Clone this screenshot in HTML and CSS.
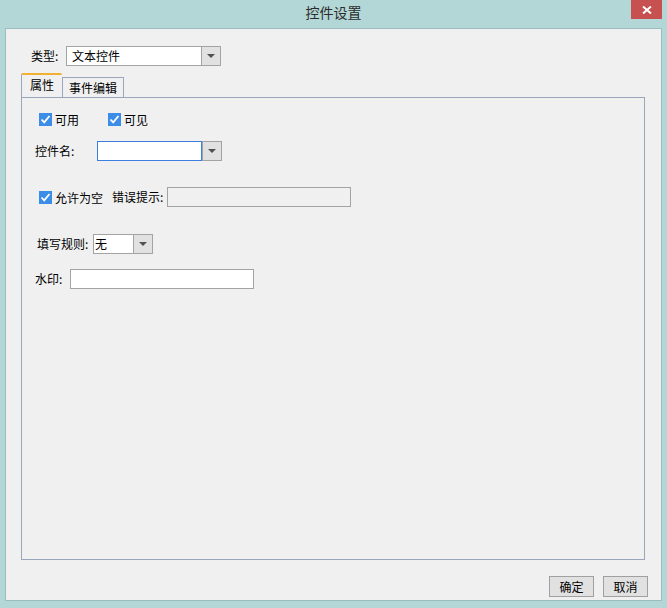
FILE: index.html
```html
<!DOCTYPE html>
<html>
<head>
<meta charset="utf-8">
<link rel="stylesheet" href="styles.css">
</head>
<body>
<div class="window">
  <div class="titlebar">
    <div class="title">控件设置</div>
    <div class="close"><svg width="10" height="8" viewBox="0 0 10 8"><path d="M1 0.5 L9 7.5 M9 0.5 L1 7.5" stroke="#fff" stroke-width="2"/></svg></div>
  </div>
  <div class="client">
    <div class="type-row">
      <span class="lbl type-lbl">类型:</span>
      <div class="combo combo-type"><div class="combo-text">文本控件</div><div class="arrow"><span class="tri"></span></div></div>
    </div>
    <div class="tabs">
      <div class="tab active">属性</div>
      <div class="tab">事件编辑</div>
    </div>
    <div class="panel">
      <div class="row row1">
        <label class="chk"><span class="box"><svg width="13" height="13" viewBox="0 0 13 13"><rect width="13" height="13" fill="#3b8de8"/><path d="M2.5 6.5 L5.2 9.3 L10.5 3" stroke="#fff" stroke-width="1.8" fill="none"/></svg></span>可用</label>
        <label class="chk chk2"><span class="box"><svg width="13" height="13" viewBox="0 0 13 13"><rect width="13" height="13" fill="#3b8de8"/><path d="M2.5 6.5 L5.2 9.3 L10.5 3" stroke="#fff" stroke-width="1.8" fill="none"/></svg></span>可见</label>
      </div>
      <div class="row row2">
        <span class="lbl name-lbl">控件名:</span>
        <div class="combo combo-name"><div class="combo-text focus"></div><div class="arrow"><span class="tri"></span></div></div>
      </div>
      <div class="row row3">
        <label class="chk"><span class="box"><svg width="13" height="13" viewBox="0 0 13 13"><rect width="13" height="13" fill="#3b8de8"/><path d="M2.5 6.5 L5.2 9.3 L10.5 3" stroke="#fff" stroke-width="1.8" fill="none"/></svg></span>允许为空</label>
        <span class="lbl err-lbl">错误提示:</span>
        <div class="input input-err"></div>
      </div>
      <div class="row row4">
        <span class="lbl rule-lbl">填写规则:</span>
        <div class="combo combo-rule"><div class="combo-text">无</div><div class="arrow"><span class="tri"></span></div></div>
      </div>
      <div class="row row5">
        <span class="lbl wm-lbl">水印:</span>
        <div class="input input-wm white"></div>
      </div>
    </div>
    <div class="buttons">
      <div class="btn">确定</div>
      <div class="btn">取消</div>
    </div>
  </div>
</div>
</body>
</html>
```
FILE: styles.css
```css
* { box-sizing: border-box; }
html, body { margin: 0; padding: 0; }
body {
  width: 667px; height: 608px; overflow: hidden;
  background: #b3d7d7;
  font-family: "Noto Sans CJK SC", "Noto Sans", sans-serif;
  font-size: 12px; color: #000;
}
.window { width: 667px; height: 608px; display: flex; flex-direction: column; }
.titlebar { height: 28px; position: relative; display: flex; justify-content: center; align-items: center; }
.title { font-size: 14px; color: #2b2b2b; margin-top: -4px; }
.close {
  position: absolute; right: 5px; top: 0; width: 31px; height: 19px;
  background: #c75050; display: flex; align-items: center; justify-content: center;
}
.client {
  margin: 0 5px; height: 573px; background: #f0f0f0;
  border: 1px solid #9bbdbd;
  display: flex; flex-direction: column;
}
.type-row { display: flex; align-items: center; height: 20px; margin-top: 17px; padding-left: 25px; }
.lbl { white-space: nowrap; line-height: 20px; }
.type-lbl { width: 35px; }
.combo { display: flex; height: 20px; }
.combo-text {
  flex: 1; background: #fff; border: 1px solid #a3a3a3; border-right: none;
  padding-left: 5px; line-height: 18px;
}
.combo-text.focus { border: 1px solid #3c7fe0; border-right: 1px solid #3c7fe0; }
.arrow {
  width: 20px; background: #e1e1e1; border: 1px solid #a3a3a3;
  display: flex; align-items: center; justify-content: center;
}
.tri { width: 0; height: 0; border-left: 4px solid transparent; border-right: 4px solid transparent; border-top: 4px solid #505050; }
.combo-type { width: 155px; }
.tabs { display: flex; align-items: flex-end; height: 24px; margin-top: 7px; padding-left: 15px; }
.tab {
  height: 20px; padding: 0 6px; border: 1px solid #9aa6bb; border-bottom: none;
  background: #f0f0f0; line-height: 19px;
}
.tab.active {
  height: 24px; width: 41px; padding: 0 8px; border-top: 2px solid #f0b030; border-radius: 2px 2px 0 0;
  line-height: 20px; border-right: none;
}
.panel {
  margin-left: 15px; width: 624px; height: 463px;
  border: 1px solid #9aa6bb; padding-top: 11px;
}
.row { display: flex; align-items: center; height: 20px; }
.chk { display: flex; align-items: center; white-space: nowrap; }
.box { width: 13px; height: 13px; margin-right: 3px; display: flex; }
.row1 { padding-left: 17px; }
.chk2 { margin-left: 29px; }
.row2 { margin-top: 12px; padding-left: 13px; }
.name-lbl { width: 62px; }
.combo-name { width: 125px; }
.row3 { margin-top: 26px; padding-left: 17px; }
.err-lbl { margin-left: 9px; width: 55px; }
.input { height: 20px; border: 1px solid #a3a3a3; background: #f0f0f0; }
.input.white { background: #fff; }
.input-err { width: 184px; }
.row4 { margin-top: 27px; padding-left: 15px; }
.rule-lbl { width: 56px; }
.combo-rule { width: 60px; }
.combo-rule .combo-text { padding-left: 1px; }
.row5 { margin-top: 15px; padding-left: 13px; }
.wm-lbl { width: 35px; }
.input-wm { width: 184px; }
.buttons { display: flex; justify-content: flex-end; gap: 9px; margin-top: 16px; padding-right: 13px; }
.btn {
  width: 45px; height: 21px; border: 1px solid #a0a0a0; background: #e1e1e1;
  text-align: center; line-height: 19px;
}
```
